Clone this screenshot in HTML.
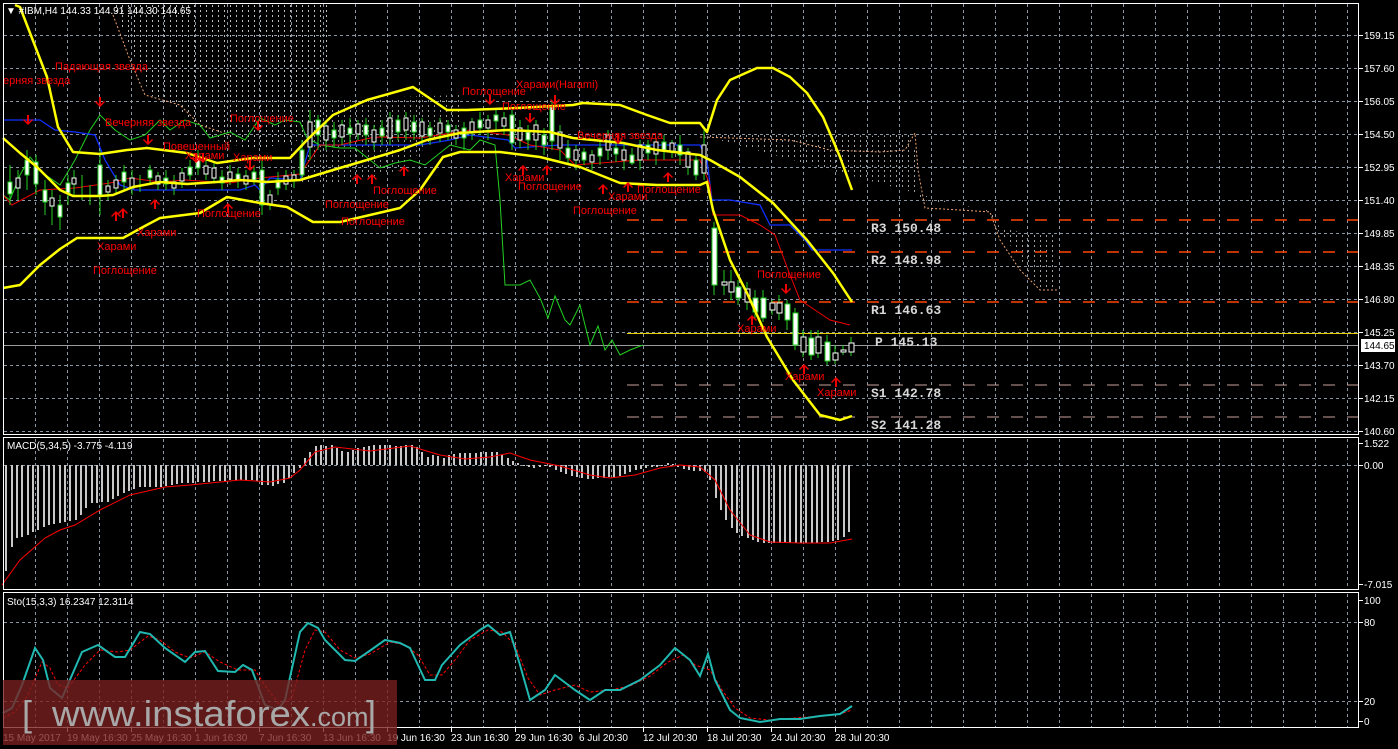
<!DOCTYPE html>
<html><head><meta charset="utf-8"><style>
html,body{margin:0;padding:0;background:#000;}
svg{display:block;}
.t{font-family:"Liberation Sans",sans-serif;font-size:10px;fill:#fff;}
.r{font-family:"Liberation Sans",sans-serif;font-size:11px;fill:#f00;}
.pv{font-family:"Liberation Mono",monospace;font-size:13px;font-weight:bold;fill:#d8d8d8;}
</style></head><body>
<svg width="1398" height="749" viewBox="0 0 1398 749" xmlns="http://www.w3.org/2000/svg">
<defs>
<pattern id="dots" width="6" height="5" patternUnits="userSpaceOnUse"><rect x="2" y="0" width="1" height="2" fill="#bbbbbb"/></pattern>
<path id="dn" d="M-1,-9 H1 V-2 L4,-5 L5,-4 L0,1 L-5,-4 L-4,-5 L-1,-2 Z" fill="#e00"/>
<path id="up" d="M-1,9 H1 V2 L4,5 L5,4 L0,-1 L-5,4 L-4,5 L-1,2 Z" fill="#e00"/>
</defs>
<rect width="1398" height="749" fill="#000"/>
<!-- vertical grid -->
<g stroke="#8a95a4" stroke-dasharray="3,3" stroke-width="1" fill="none">
<path d="M35.5,4V434M67.5,4V434M99.5,4V434M131.5,4V434M163.5,4V434M195.5,4V434M227.5,4V434M259.5,4V434M291.5,4V434M323.5,4V434M355.5,4V434M387.5,4V434M419.5,4V434M451.5,4V434M483.5,4V434M515.5,4V434M547.5,4V434M579.5,4V434M611.5,4V434M643.5,4V434M675.5,4V434M707.5,4V434M739.5,4V434M771.5,4V434M803.5,4V434M835.5,4V434M867.5,4V434M899.5,4V434M931.5,4V434M963.5,4V434M995.5,4V434M1027.5,4V434M1059.5,4V434M1091.5,4V434M1123.5,4V434M1155.5,4V434M1187.5,4V434M1219.5,4V434M1251.5,4V434M1283.5,4V434M1315.5,4V434M1347.5,4V434"/>
<path d="M35.5,439V589M67.5,439V589M99.5,439V589M131.5,439V589M163.5,439V589M195.5,439V589M227.5,439V589M259.5,439V589M291.5,439V589M323.5,439V589M355.5,439V589M387.5,439V589M419.5,439V589M451.5,439V589M483.5,439V589M515.5,439V589M547.5,439V589M579.5,439V589M611.5,439V589M643.5,439V589M675.5,439V589M707.5,439V589M739.5,439V589M771.5,439V589M803.5,439V589M835.5,439V589M867.5,439V589M899.5,439V589M931.5,439V589M963.5,439V589M995.5,439V589M1027.5,439V589M1059.5,439V589M1091.5,439V589M1123.5,439V589M1155.5,439V589M1187.5,439V589M1219.5,439V589M1251.5,439V589M1283.5,439V589M1315.5,439V589M1347.5,439V589"/>
<path d="M35.5,594V727M67.5,594V727M99.5,594V727M131.5,594V727M163.5,594V727M195.5,594V727M227.5,594V727M259.5,594V727M291.5,594V727M323.5,594V727M355.5,594V727M387.5,594V727M419.5,594V727M451.5,594V727M483.5,594V727M515.5,594V727M547.5,594V727M579.5,594V727M611.5,594V727M643.5,594V727M675.5,594V727M707.5,594V727M739.5,594V727M771.5,594V727M803.5,594V727M835.5,594V727M867.5,594V727M899.5,594V727M931.5,594V727M963.5,594V727M995.5,594V727M1027.5,594V727M1059.5,594V727M1091.5,594V727M1123.5,594V727M1155.5,594V727M1187.5,594V727M1219.5,594V727M1251.5,594V727M1283.5,594V727M1315.5,594V727M1347.5,594V727"/>
<path d="M4,35.5H1358M4,68.5H1358M4,101.5H1358M4,134.5H1358M4,167.5H1358M4,200.5H1358M4,233.5H1358M4,266.5H1358M4,299.5H1358M4,332.5H1358M4,365.5H1358M4,398.5H1358M4,431.5H1358M4,465.5H1358M4,622.5H1358M4,701.5H1358"/>
</g>
<!-- clouds -->
<polygon points="113,5 330,5 330,125 300,140 255,150 215,140 180,110 150,95 140,70" fill="url(#dots)"/>
<polyline points="113,15 130,60 145,95 180,105 200,125 230,135" fill="none" stroke="#e8a070" stroke-dasharray="2,2"/>
<polygon points="300,100 460,95 460,130 440,135 400,170 340,185 300,185" fill="url(#dots)" opacity="0.8"/>
<polygon points="700,135 800,133 880,136 910,132 915,150 920,200 960,205 990,212 1000,235 1015,250 1040,290 1058,290 1058,235 1020,232 1000,228 990,210 960,205" fill="url(#dots)" opacity="0.85"/>
<polyline points="700,137 790,140 830,150 880,152 905,150 915,133 918,170 925,208 960,210 990,212 1000,240 1020,270 1040,290 1058,290" fill="none" stroke="#e8a070" stroke-dasharray="2,2"/>
<!-- pivot lines -->
<g stroke-dasharray="12,12" stroke-width="1.5">
<path d="M627,220H1358M627,252H1358M627,302H1358" stroke="#ff4500"/>
<path d="M627,385H1358M627,417H1358" stroke="#c8a09a" stroke-width="1"/>
</g>
<path d="M627,333.5H1358" stroke="#e8d000"/>
<path d="M4,345.5H1358" stroke="#9a9a9a"/>
<text class="pv" x="871" y="232">R3 150.48</text>
<text class="pv" x="871" y="264">R2 148.98</text>
<text class="pv" x="871" y="314">R1 146.63</text>
<text class="pv" x="875" y="346">P 145.13</text>
<text class="pv" x="871" y="397">S1 142.78</text>
<text class="pv" x="871" y="429">S2 141.28</text>
<!-- green line -->
<polyline fill="none" stroke="#22d022" stroke-width="1" points="3,195 10,200 20,175 30,157 43,173 60,185 75,160 90,130 100,115 115,130 130,140 145,135 160,120 170,130 185,120 200,125 210,138 230,132 245,140 260,118 275,125 285,120 300,122 307,138 320,145 340,148 355,148 370,160 380,168 395,163 410,160 425,165 450,145 470,150 480,140 495,145 500,200 505,285 520,285 530,280 540,298 548,318 555,296 565,320 570,325 580,305 590,345 598,326 605,350 612,340 620,355 630,350 643,345"/>
<!-- blue -->
<polyline fill="none" stroke="#1030ff" stroke-width="1.3" points="3,120 40,120 55,130 75,132 95,135 105,160 120,185 135,190 240,190 255,185 260,190 270,178 300,180 310,145 330,145 420,145 450,140 470,135 508,140 515,148 560,145 600,145 700,145 707,160 712,200 730,200 760,205 770,225 790,225 805,240 812,250 852,250"/>
<!-- red -->
<polyline fill="none" stroke="#e00" stroke-width="1" points="3,195 12,205 40,190 75,188 110,183 130,178 160,182 185,180 230,183 260,178 300,174 320,145 340,145 370,138 380,137 420,138 470,130 508,135 530,145 560,150 575,165 640,160 700,160 710,185 713,215 740,215 760,225 775,235 790,275 800,300 815,310 830,320 850,325"/>
<!-- candles -->
<g stroke="#22d022" stroke-width="1" fill="#fff">
<path d="M10,165V205M18,170V200M27,150V190M36,155V195M45,180V215M52,190V225M60,195V230M68,175V205M74,170V195M82,175V200M90,185V205M100,150V215M108,180V200M116,175V195M124,165V190M132,170V195M140,175V192M150,165V185M158,172V190M166,170V190M174,175V195M182,168V188M190,160V180M198,150V175M206,160V180M214,162V182M222,170V190M230,165V185M238,168V188M246,170V190M254,165V185M262,160V215M270,190V210M278,172V195M286,170V190M294,170V188M302,140V180M310,110V160M318,115V150M326,120V150M334,122V148M342,120V145M350,118V145M358,120V140M366,118V145M374,125V150M382,120V145M390,112V145M398,115V140M406,112V140M414,115V140M422,118V145M430,122V145M440,118V142M448,120V140M456,125V145M464,122V150M472,118V140M480,112V135M488,115V140M496,108V132M504,112V135M512,108V150M520,120V148M528,125V150M536,120V150M544,128V155M552,100V150M560,125V160M568,140V165M576,145V170M584,148V165M592,150V170M600,140V165M608,130V160M616,140V162M624,145V170M632,148V165M640,140V170M648,140V160M656,138V165M664,135V160M672,140V158M680,135V165M688,148V175M696,155V180M704,130V180M714,222V295M724,270V295M731,270V300M738,280V305M747,282V310M755,290V318M763,290V322M772,300V315M779,295V320M787,300V330M795,308V350M803,330V357M811,330V360M818,330V358M827,335V365M835,345V364M843,345V355M851,337V356"/>
<path d="M8,182h4v12h-4zM25,160h4v15h-4zM34,162h4v22h-4zM43,190h4v12h-4zM58,205h4v12h-4zM66,183h4v10h-4zM98,165h4v30h-4zM122,172h4v10h-4zM148,170h4v8h-4zM164,178h4v6h-4zM188,167h4v8h-4zM196,158h4v10h-4zM220,177h4v6h-4zM236,174h4v7h-4zM252,172h4v8h-4zM260,170h4v35h-4zM276,180h4v8h-4zM300,150h4v25h-4zM316,120h4v15h-4zM332,130h4v8h-4zM348,128h4v6h-4zM364,125h4v10h-4zM380,128h4v8h-4zM396,120h4v12h-4zM412,122h4v10h-4zM428,128h4v8h-4zM446,125h4v7h-4zM462,128h4v10h-4zM478,120h4v8h-4zM494,115h4v6h-4zM510,115h4v28h-4zM526,132h4v8h-4zM542,135h4v10h-4zM550,106h4v35h-4zM566,148h4v10h-4zM582,152h4v8h-4zM598,148h4v8h-4zM614,148h4v6h-4zM630,155h4v8h-4zM646,145h4v8h-4zM662,142h4v8h-4zM678,145h4v10h-4zM694,160h4v15h-4zM712,228h5v57h-5zM736,287h5v11h-5zM753,298h5v14h-5zM761,298h5v20h-5zM785,304h5v16h-5zM793,313h5v32h-5zM809,338h5v17h-5zM825,342h5v19h-5z"/>
<path d="M16,178h4v10h-4zM50,198h4v8h-4zM72,178h4v6h-4zM106,186h4v6h-4zM114,180h4v8h-4zM130,178h4v10h-4zM156,176h4v8h-4zM172,182h4v6h-4zM180,173h4v8h-4zM204,166h4v8h-4zM212,168h4v10h-4zM228,172h4v7h-4zM244,176h4v8h-4zM268,195h4v10h-4zM284,176h4v8h-4zM292,175h4v6h-4zM308,122h4v25h-4zM324,126h4v14h-4zM340,125h4v12h-4zM356,124h4v10h-4zM372,130h4v12h-4zM388,118h4v20h-4zM404,118h4v12h-4zM420,122h4v14h-4zM438,123h4v10h-4zM454,130h4v8h-4zM470,122h4v10h-4zM486,120h4v8h-4zM502,118h4v8h-4zM518,128h4v12h-4zM534,125h4v15h-4zM558,132h4v16h-4zM574,150h4v10h-4zM590,155h4v7h-4zM606,135h4v15h-4zM622,150h4v10h-4zM638,145h4v15h-4zM654,142h4v12h-4zM670,143h4v8h-4zM686,152h4v15h-4zM702,145h4v28h-4zM722,282h5v3h-5zM729,282h5v10h-5zM745,289h5v13h-5zM770,303h5v7h-5zM777,303h5v10h-5zM801,337h5v15h-5zM816,337h5v16h-5zM833,353h5v7h-5zM841,350h5v2h-5zM849,343h5v9h-5z" fill="#000" stroke="#fff"/>
</g>
<!-- yellow bands -->
<g fill="none" stroke="#ffff00" stroke-width="2.5" stroke-linejoin="round">
<polyline points="15,5 20,7 47,77 58,127 73,152 100,154 127,150 147,148 187,153 217,163 253,158 290,158 307,140 333,115 367,100 413,87 447,110 460,110 467,110 517,108 573,105 583,103 620,105 647,115 670,123 700,123 707,132 717,100 730,80 757,68 773,68 790,77 807,93 823,117 840,157 852,190"/>
<polyline points="3,138 20,153 37,167 60,190 73,196 100,196 113,195 133,187 160,182 187,184 217,182 240,180 267,182 300,180 333,170 367,160 400,150 427,140 460,133 507,130 550,132 573,138 623,143 657,150 700,155 710,160 740,177 773,203 807,240 833,273 852,302"/>
<polyline points="3,288 20,285 40,265 60,249 77,238 123,238 143,227 160,218 200,213 227,197 260,203 287,207 313,222 340,222 400,208 420,190 443,157 460,152 500,152 540,157 580,167 620,183 657,185 700,185 707,182 713,210 730,260 747,293 767,337 793,380 820,415 840,420 852,416"/>
</g>
<!-- arrows -->
<use href="#dn" x="100" y="106"/><use href="#dn" x="28" y="124"/><use href="#dn" x="148" y="144"/><use href="#dn" x="196" y="162"/><use href="#dn" x="203" y="162"/><use href="#dn" x="250" y="170"/><use href="#dn" x="258" y="130"/><use href="#dn" x="490" y="104"/><use href="#dn" x="530" y="122"/><use href="#dn" x="555" y="104"/><use href="#dn" x="618" y="143"/><use href="#dn" x="786" y="293"/>
<use href="#up" x="116" y="212"/><use href="#up" x="123" y="209"/><use href="#up" x="155" y="200"/><use href="#up" x="228" y="204"/><use href="#up" x="357" y="175"/><use href="#up" x="372" y="175"/><use href="#up" x="404" y="167"/><use href="#up" x="523" y="166"/><use href="#up" x="547" y="166"/><use href="#up" x="603" y="185"/><use href="#up" x="628" y="183"/><use href="#up" x="668" y="173"/><use href="#up" x="752" y="316"/><use href="#up" x="804" y="365"/><use href="#up" x="836" y="378"/>
<!-- pattern labels -->
<g class="r">
<text x="55" y="70">Падающая звезда</text>
<text x="3" y="84">ерняя звезда</text>
<text x="105" y="126">Вечерняя звезда</text>
<text x="230" y="122">Поглощение</text>
<text x="163" y="150">Повешенный</text>
<text x="185" y="159">Харами</text>
<text x="233" y="161">Харами</text>
<text x="197" y="217">Поглощение</text>
<text x="325" y="208">Поглощение</text>
<text x="373" y="194">Поглощение</text>
<text x="341" y="225">Поглощение</text>
<text x="137" y="236">Харами</text>
<text x="97" y="250">Харами</text>
<text x="93" y="274">Поглощение</text>
<text x="462" y="95">Поглощение</text>
<text x="516" y="88">Харами(Harami)</text>
<text x="502" y="110">Поглощение</text>
<text x="577" y="139">Вечерняя звезда</text>
<text x="505" y="181">Харами</text>
<text x="518" y="190">Поглощение</text>
<text x="608" y="200">Харами</text>
<text x="573" y="214">Поглощение</text>
<text x="637" y="193">Поглощение</text>
<text x="757" y="278">Поглощение</text>
<text x="737" y="332">Харами</text>
<text x="785" y="380">Харами</text>
<text x="817" y="396">Харами</text>
</g>
<!-- MACD -->
<g stroke="#c8c8c8" stroke-width="2">
<path d="M6,465V571M12,465V547M17,465V538M22,465V537M28,465V535M33,465V532M38,465V530M44,465V527M49,465V525M54,465V524M60,465V523M65,465V522M70,465V521M76,465V520M81,465V515M86,465V508M92,465V503M97,465V503M102,465V502M108,465V502M113,465V499M118,465V496M124,465V493M129,465V491M134,465V489M140,465V487M145,465V487M150,465V487M156,465V487M161,465V487M166,465V486M172,465V485M177,465V484M182,465V483M188,465V483M193,465V483M198,465V482M204,465V482M209,465V482M214,465V481M220,465V481M225,465V481M230,465V480M236,465V480M241,465V480M246,465V480M252,465V480M257,465V481M262,465V485M268,465V485M273,465V486M278,465V484M284,465V483M289,465V478M294,465V473M300,465V468"/>
<path d="M305,465V458M310,465V452M316,465V446M321,465V445M326,465V446M332,465V445M337,465V448M342,465V451M348,465V452M353,465V450M358,465V448M364,465V447M369,465V446M374,465V445M380,465V445M385,465V445M390,465V445M396,465V446M401,465V446M406,465V445M412,465V445M417,465V447M422,465V452M428,465V457M433,465V455M438,465V456M444,465V458M449,465V455M454,465V454M460,465V453M465,465V453M470,465V453M476,465V453M481,465V452M486,465V452M492,465V452M497,465V452M502,465V455M508,465V458M513,465V461M518,465V463"/>
<path d="M524,465V466M529,465V467M534,465V468M540,465V467M545,465V466M550,465V467M556,465V470M561,465V472M566,465V474M572,465V476M577,465V477M582,465V478M588,465V479M593,465V479M598,465V478M604,465V478M609,465V477M614,465V477M620,465V476M625,465V474M630,465V472M636,465V470M641,465V469M646,465V468M652,465V467M657,465V467M662,465V466M668,465V463M673,465V464M678,465V467M684,465V469M689,465V470M694,465V471M700,465V471M705,465V472M710,465V480M716,465V498M721,465V510M726,465V520M732,465V528M737,465V533M742,465V536M748,465V538M753,465V540M758,465V542M764,465V543M769,465V543M774,465V543M780,465V543M785,465V543M790,465V543M796,465V543M801,465V543M806,465V543M812,465V543M817,465V543M822,465V542M828,465V542M833,465V541M838,465V540M844,465V537M849,465V532"/>
</g>
<polyline fill="none" stroke="#f00" stroke-width="1" points="2,585 20,560 45,538 60,530 75,525 100,510 130,495 165,487 190,485 240,480 270,482 290,478 300,470 315,452 335,447 370,451 410,446 440,455 465,459 490,457 510,453 530,460 560,466 590,475 610,478 635,475 660,468 680,465 700,467 715,480 730,510 750,535 770,542 800,543 830,543 852,539"/>
<!-- Stochastic -->
<polyline fill="none" stroke="#f00" stroke-width="1" stroke-dasharray="3,2" points="3,718 15,712 28,695 42,662 50,668 58,685 68,688 85,665 100,650 118,652 130,650 148,636 160,640 175,652 190,658 205,652 220,662 238,670 255,670 268,690 280,705 292,698 305,650 315,630 325,632 340,650 355,658 370,654 390,642 405,645 418,655 430,675 442,675 455,660 470,640 488,630 502,632 515,645 528,678 540,695 555,690 575,685 590,692 610,690 630,686 650,676 668,662 683,655 695,665 710,670 722,690 735,708 750,718 770,720 795,718 820,716 840,714 852,710"/>
<polyline fill="none" stroke="#20b8b0" stroke-width="2" points="3,713 12,708 22,685 35,648 43,660 50,688 62,698 82,652 98,645 115,657 125,657 140,632 150,634 165,648 185,662 195,652 205,651 218,671 235,672 243,665 252,670 265,705 278,710 285,700 300,632 308,623 318,628 325,640 345,660 355,661 368,652 385,640 400,643 410,648 425,680 435,680 442,665 460,645 480,630 488,625 500,635 510,632 520,665 530,700 545,690 555,675 575,690 590,700 605,690 620,690 640,680 660,665 675,648 690,660 700,676 708,654 715,680 730,710 740,718 760,722 780,719 800,719 820,716 840,714 852,706"/>
<!-- frames -->
<g fill="none" stroke="#fff" stroke-width="1">
<rect x="3.5" y="3.5" width="1355" height="431"/>
<rect x="3.5" y="437.5" width="1355" height="152"/>
<rect x="3.5" y="592.5" width="1355" height="135"/>
</g>
<!-- axis ticks -->
<g stroke="#fff"><path d="M1359,35.5h4M1359,68.5h4M1359,101.5h4M1359,134.5h4M1359,167.5h4M1359,200.5h4M1359,233.5h4M1359,266.5h4M1359,299.5h4M1359,332.5h4M1359,365.5h4M1359,398.5h4M1359,431.5h4M1359,443.5h4M1359,465.5h4M1359,584.5h4M1359,600.5h4M1359,622.5h4M1359,701.5h4M1359,721.5h4"/>
<path d="M67.5,728v4M131.5,728v4M195.5,728v4M259.5,728v4M323.5,728v4M387.5,728v4M451.5,728v4M515.5,728v4M579.5,728v4M643.5,728v4M707.5,728v4M771.5,728v4M835.5,728v4"/></g>
<g class="t">
<text x="1364" y="39">159.15</text><text x="1364" y="72">157.60</text><text x="1364" y="105">156.05</text><text x="1364" y="138">154.50</text><text x="1364" y="171">152.95</text><text x="1364" y="204">151.40</text><text x="1364" y="237">149.85</text><text x="1364" y="270">148.35</text><text x="1364" y="303">146.80</text><text x="1364" y="336">145.25</text><text x="1364" y="369">143.70</text><text x="1364" y="402">142.15</text><text x="1364" y="435">140.60</text>
<text x="1364" y="447">1.522</text><text x="1364" y="469">0.00</text><text x="1364" y="588">-7.015</text>
<text x="1364" y="604">100</text><text x="1364" y="626">80</text><text x="1364" y="705">20</text><text x="1364" y="725">0</text>
</g>
<rect x="1361" y="339" width="34" height="13" fill="#fff"/>
<text x="1364" y="349" class="t" style="fill:#000">144.65</text>
<g class="t">
<text x="3" y="741">15 May 2017</text><text x="67" y="741">19 May 16:30</text><text x="131" y="741">25 May 16:30</text><text x="195" y="741">1 Jun 16:30</text><text x="259" y="741">7 Jun 16:30</text><text x="323" y="741">13 Jun 16:30</text><text x="387" y="741">19 Jun 16:30</text><text x="451" y="741">23 Jun 16:30</text><text x="515" y="741">29 Jun 16:30</text><text x="579" y="741">6 Jul 20:30</text><text x="643" y="741">12 Jul 20:30</text><text x="707" y="741">18 Jul 20:30</text><text x="771" y="741">24 Jul 20:30</text><text x="835" y="741">28 Jul 20:30</text>
</g>
<text x="6" y="14" class="t">▼ #IBM,H4  144.33 144.91 144.30 144.65</text>
<text x="7" y="449" class="t">MACD(5,34,5) -3.775 -4.119</text>
<text x="7" y="605" class="t">Sto(15,3,3) 16.2347 12.3114</text>
<!-- watermark -->
<rect x="3" y="680" width="394" height="65" fill="#7a2020" opacity="0.78"/>
<g font-family="Liberation Sans,sans-serif" fill="#a8a8a8">
<text x="22" y="726" font-size="36">[</text>
<text x="52" y="726" font-size="36" textLength="258" lengthAdjust="spacingAndGlyphs">www.instaforex</text>
<text x="310" y="726" font-size="27">.com</text>
<text x="366" y="726" font-size="36">]</text>
</g>
</svg>
</body></html>
